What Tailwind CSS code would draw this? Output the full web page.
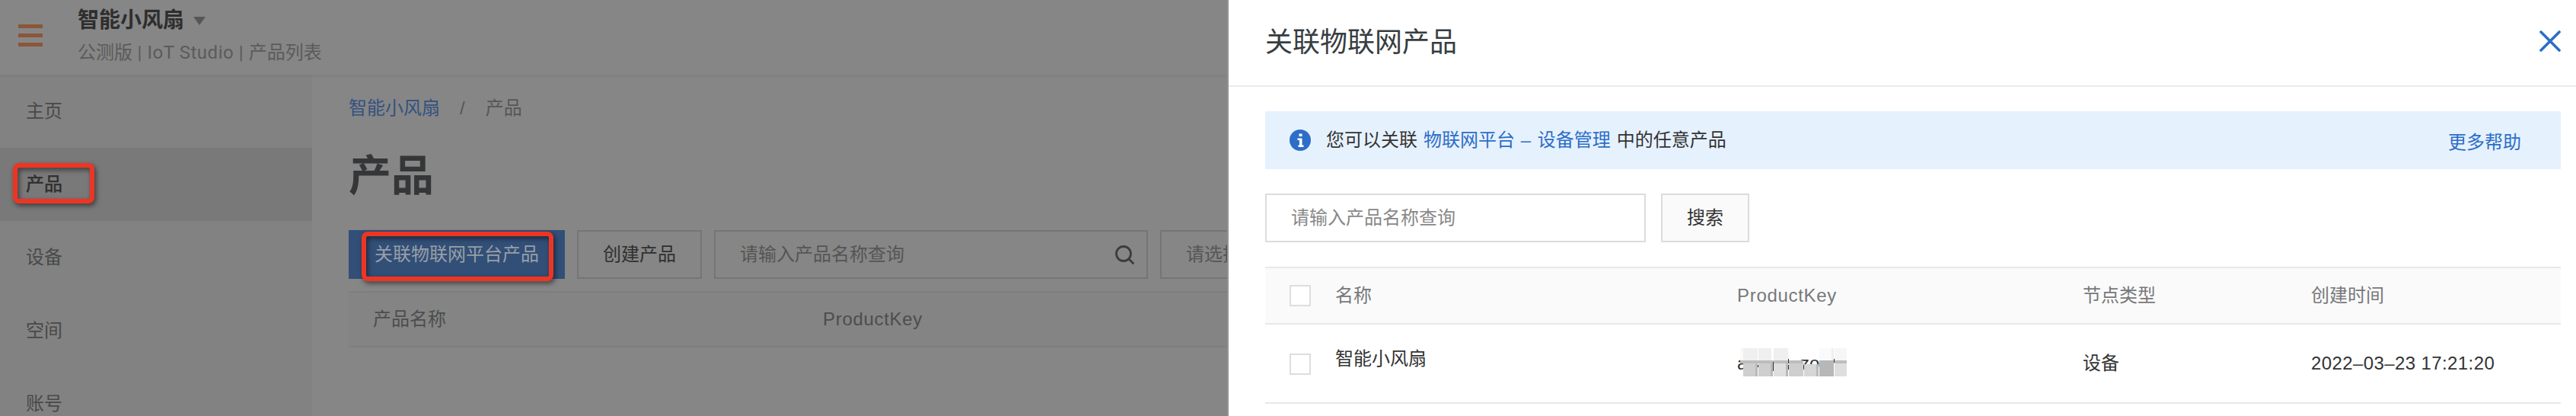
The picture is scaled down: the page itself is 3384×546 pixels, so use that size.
<!DOCTYPE html>
<html lang="zh-CN">
<head>
<meta charset="utf-8">
<title>关联物联网产品</title>
<script src="https://cdn.jsdelivr.net/npm/@tailwindcss/browser@4"></script>
</head>
<body class="w-[3384px] h-[546px] overflow-hidden flex bg-white text-2xl/[36px] font-['Liberation_Sans','Noto_Sans_CJK_SC',sans-serif]">
  <!-- dimmed page -->
  <div class="w-[1614px] h-[546px] shrink-0 overflow-hidden flex flex-col bg-[#868686] border-r-2 border-[#949494] whitespace-nowrap">
    <header class="relative z-10 h-[98px] shrink-0 flex pl-6 shadow-[0_2px_4px_rgba(0,0,0,0.05)]">
      <div class="w-[78px] pt-8 flex flex-col gap-[7px]">
        <span class="w-8 h-[5px] bg-[#8c5637]"></span>
        <span class="w-8 h-[5px] bg-[#8c5637]"></span>
        <span class="w-8 h-[5px] bg-[#8c5637]"></span>
      </div>
      <div class="flex flex-col pt-[7px]">
        <div class="flex items-center h-10 text-[28px] font-bold text-[#2e2e2e]">智能小风扇<svg class="ml-3 w-4 h-[11px]" viewBox="0 0 16 11"><path d="M0 0h16L8 11z" fill="#565656"/></svg></div>
        <div class="text-[#5b5b5b] mt-1 font-[Roboto,'Noto_Sans_CJK_SC',sans-serif]">公测版<span class="tracking-[0.55px]"> | IoT Studio | </span>产品列表</div>
      </div>
    </header>
    <div class="flex grow">
      <nav class="w-[410px] shrink-0 bg-[#828282] text-[#494949]">
        <div class="h-24 pl-[34px] flex items-center">主页</div>
        <div class="relative h-24 pl-[34px] flex items-center bg-[#797979] text-[#2f2f2f] [-webkit-text-stroke:0.5px_#2f2f2f]">产品
          <span class="absolute left-[17px] top-5 w-[107px] h-[53px] border-[6px] border-[#ee3524] rounded-lg drop-shadow-[2px_3px_3px_rgba(0,0,0,0.55)]"></span>
        </div>
        <div class="h-24 pl-[34px] flex items-center">设备</div>
        <div class="h-24 pl-[34px] flex items-center">空间</div>
        <div class="h-24 pl-[34px] flex items-center">账号</div>
      </nav>
      <main class="pl-12 pt-[26px] grow">
        <div class="flex text-[#565656]"><span class="text-[#33527f]">智能小风扇</span><span class="ml-[26px] mr-[27px]">/</span><span>产品</span></div>
        <h1 class="text-[56px]/[80px] mt-[31px] font-bold text-[#353637]">产品</h1>
        <div class="flex gap-4 mt-[31px] h-16">
          <div class="relative w-[284px] flex items-center justify-center bg-[#324f77] text-[#999fa7]">关联物联网平台产品
            <span class="absolute left-[17px] top-[2px] w-[252px] h-[65px] border-[6px] border-[#ee3524] rounded-lg drop-shadow-[2px_3px_3px_rgba(0,0,0,0.55)]"></span>
          </div>
          <div class="w-[164px] flex items-center justify-center border-2 border-[#757575] text-[#2f2f2f]">创建产品</div>
          <div class="w-[570px] flex items-center justify-between border-2 border-[#757575] pl-8 pr-4 text-[#555]">请输入产品名称查询<svg class="w-[25px] h-[25px]" viewBox="0 0 25 25" fill="none" stroke="#3c3c3c" stroke-width="2.8" stroke-linecap="round"><circle cx="11" cy="11" r="9.5"/><path d="M18 18l5.500 5.500"/></svg></div>
          <div class="w-[300px] flex items-center border-2 border-[#757575] pl-8 text-[#555]">请选择</div>
        </div>
        <div class="mt-4 h-[74px] flex items-center border-y-2 border-[#7e7e7e] bg-[#848484] text-[#4d4d4d] pl-8">
          <span class="w-[591px]">产品名称</span><span class="tracking-[0.7px]">ProductKey</span>
        </div>
      </main>
    </div>
  </div>

  <!-- drawer -->
  <section class="grow h-[546px] whitespace-nowrap text-[#333]">
    <header class="h-[114px] border-b-2 border-[#ebebeb] pl-12 pr-5 flex items-center justify-between">
      <h2 class="text-4xl text-[#373d41]">关联物联网产品</h2>
      <svg class="w-7 h-7 mb-1" viewBox="0 0 28 28" stroke="#2c6ec7" stroke-width="3.6" stroke-linecap="round"><path d="M2 2l24 24M26 2L2 26"/></svg>
    </header>
    <div class="ml-12 mr-5 mt-8">
      <div class="h-[76px] bg-[#e6f1fe] flex items-center pl-8 pr-[52px]">
        <svg class="w-7 h-7 mr-5" viewBox="0 0 28 28"><circle cx="14" cy="14" r="14" fill="#2c6ec7"/><path d="M12.500 5.500h4v3.500h-4zM10.500 11.500h6v9h2v2.500h-7v-2.500h1.500v-6.500h-2.500z" fill="#fff"/></svg>
        <span>您可以关联<span class="text-[#2c6ec7] mx-2">物联网平台<span class="tracking-[1px]"> – </span>设备管理</span>中的任意产品</span>
        <span class="ml-auto pt-1.5 text-[#2c6ec7]">更多帮助</span>
      </div>
      <div class="flex gap-5 mt-8 h-16">
        <div class="w-[500px] border-2 border-[#dcdcdc] flex items-center pl-8 text-[#888]">请输入产品名称查询</div>
        <div class="w-[116px] border-2 border-[#dcdcdc] bg-[#fafafa] flex items-center justify-center">搜索</div>
      </div>
      <div class="mt-8 h-[76px] border-y-2 border-[#e9e9e9] bg-[#fafafa] flex items-center pl-8 text-[#77787a]">
        <span class="w-7 h-7 mr-8 border-2 border-[#dedede] bg-white"></span>
        <span class="w-[528px]">名称</span><span class="w-[454px] tracking-[0.7px]">ProductKey</span><span class="w-[300px]">节点类型</span><span>创建时间</span>
      </div>
      <div class="h-[104px] border-b-2 border-[#e9e9e9] flex items-center pl-8">
        <span class="w-7 h-7 mr-8 mt-0.5 border-2 border-[#dedede] bg-white"></span>
        <span class="w-[528px] pb-3">智能小风扇</span>
        <span class="w-[454px]">
          <!-- pixelated product key -->
          <svg class="block w-[160px] h-[60px] -ml-1.5 -mt-1" viewBox="0 0 160 60" shape-rendering="crispEdges">
            <text x="6" y="40" font-size="24" fill="#333">a</text>
            <text x="89" y="40" font-size="24" fill="#333">zo</text>
            <path d="M10 12h4v16h-4zM114 12h16v16h-16z" fill="#fafafa"/>
            <path d="M14 12h19v16H14zM34 12h17v16H34zM54 12h19v16H54zM130 12h3v16h-3z" fill="#efefef"/>
            <path d="M134 12h16v16h-16z" fill="#f6f6f6"/>
            <path d="M14 28h19v21H14zM34 28h19v21H34zM74 28h19v21H74z" fill="#cecece"/>
            <path d="M54 28h19v21H54zM134 28h16v21h-16z" fill="#dedede"/>
            <path d="M94 33h19v16H94z" fill="#d6d6d6"/>
            <path d="M114 28h19v21h-19z" fill="#b7b7b7"/>
            <path d="M10 28h63v4H10zM74 28h19v4H74zM134 28h16v4h-16z" fill="#bdbdbd"/>
            <path d="M30 32h3v17h-3zM50 32h3v17h-3zM70 32h3v17h-3zM110 33h3v16h-3z" fill="#b9b9b9"/>
            <path d="M33 34h1v3h-1zM53 30h1v12h-1zM73 26h1v6h-1zM73 34h1v6h-1zM133 26h1v5h-1zM93 35h1v3h-1z" fill="#333"/>
          </svg>
        </span>
        <span class="w-[300px]">设备</span><span class="tracking-[0.4px]">2022–03–23 17:21:20</span>
      </div>
    </div>
  </section>
</body>
</html>
